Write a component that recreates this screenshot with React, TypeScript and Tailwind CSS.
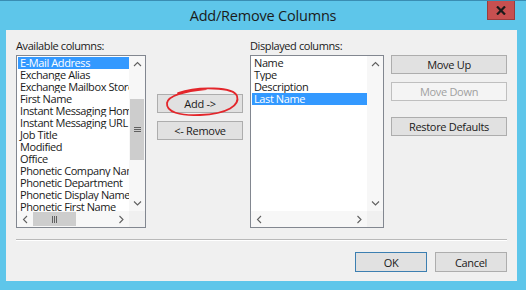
import React from "react";

const font = { fontFamily: '"Open Sans", "Noto Sans", sans-serif' };

const available = [
  "E-Mail Address",
  "Exchange Alias",
  "Exchange Mailbox Store",
  "First Name",
  "Instant Messaging Home Page",
  "Instant Messaging URL",
  "Job Title",
  "Modified",
  "Office",
  "Phonetic Company Name",
  "Phonetic Department",
  "Phonetic Display Name",
  "Phonetic First Name",
];

const displayed = ["Name", "Type", "Description", "Last Name"];

type Dir = "up" | "down" | "left" | "right";

const Arrow = ({ dir }: { dir: Dir }) => {
  const pts = {
    up: "1,5 4.5,1.5 8,5",
    down: "1,1.5 4.5,5 8,1.5",
    left: "5,1 1.5,4.5 5,8",
    right: "1.5,1 5,4.5 1.5,8",
  }[dir];
  const vertical = dir === "up" || dir === "down";
  return (
    <svg
      width={vertical ? 9 : 7}
      height={vertical ? 7 : 9}
      viewBox={vertical ? "0 0 9 7" : "0 0 7 9"}
    >
      <polyline points={pts} fill="none" stroke="#606060" strokeWidth="1.1" />
    </svg>
  );
};

const WinButton = ({
  label,
  className = "",
  disabled = false,
  isDefault = false,
}: {
  label: string;
  className?: string;
  disabled?: boolean;
  isDefault?: boolean;
}) => (
  <div
    className={`flex items-center justify-center text-[11px] tracking-[-0.3px] leading-none ${
      disabled
        ? "bg-[#f4f4f4] border border-[#bfbfbf] text-[#a0a0a0]"
        : isDefault
        ? "bg-[#e1e1e1] border border-[#3c7fb1] text-[#1a1a1a]"
        : "bg-[#e1e1e1] border border-[#adadad] text-[#1a1a1a]"
    } ${className}`}
  >
    {label}
  </div>
);

const ListBox = ({
  items,
  selected,
  withThumbs,
}: {
  items: string[];
  selected: number;
  withThumbs: boolean;
}) => (
  <div className="border border-[#828790] bg-white flex flex-col h-[173px]">
    <div className="flex flex-1 min-h-0">
      <div className="flex-1 min-w-0 overflow-hidden pt-[1px] pl-[1px]">
        {items.map((it, i) => (
          <div
            key={it}
            className={`h-[12px] leading-[12px] text-[11px] tracking-[-0.4px] whitespace-nowrap overflow-hidden pl-[2px] ${
              i === selected ? "bg-[#3399ff] text-white" : "text-[#1a1a1a]"
            }`}
          >
            {it}
          </div>
        ))}
      </div>
      <div className="w-[16px] flex flex-col bg-[#f7f7f7]">
        <div className="h-[16px] flex items-center justify-center">
          <Arrow dir="up" />
        </div>
        <div className="flex-1 flex flex-col">
          {withThumbs && (
            <>
              <div className="h-[27px]" />
              <div className="h-[61px] bg-[#cdcdcd] mx-[1px] flex items-center justify-center">
                <svg width="7" height="7" viewBox="0 0 7 7">
                  <path d="M0 1.5h7M0 3.5h7M0 5.5h7" stroke="#606060" strokeWidth="1" />
                </svg>
              </div>
            </>
          )}
        </div>
        <div className="h-[16px] flex items-center justify-center">
          <Arrow dir="down" />
        </div>
      </div>
    </div>
    <div className="h-[16px] flex">
      <div className="flex-1 flex bg-[#f7f7f7]">
        <div className="w-[16px] flex items-center justify-center">
          <Arrow dir="left" />
        </div>
        <div className="flex-1 flex">
          {withThumbs && (
            <div className="w-[43px] bg-[#cdcdcd] my-[1px] flex items-center justify-center">
              <svg width="7" height="7" viewBox="0 0 7 7">
                <path d="M1.5 0v7M3.5 0v7M5.5 0v7" stroke="#606060" strokeWidth="1" />
              </svg>
            </div>
          )}
        </div>
        <div className="w-[16px] flex items-center justify-center">
          <Arrow dir="right" />
        </div>
      </div>
      <div className="w-[16px] bg-[#f0f0f0]" />
    </div>
  </div>
);

export default function App() {
  return (
    <div
      className="relative w-[526px] h-[290px] bg-[#5ec6ea] border-t border-[#3a8db3] flex flex-col overflow-hidden"
      style={font}
    >
      {/* title bar */}
      <div className="relative h-[29px] flex items-center justify-center">
        <span className="text-[14.5px] tracking-[-0.2px] text-[#1b1b1b] pt-[1px]">
          Add/Remove Columns
        </span>
        <div className="absolute right-[11px] top-[-1px] w-[28px] h-[20px] bg-[#c75050] border border-[#9b3c3c] flex items-center justify-center">
          <svg width="10" height="9" viewBox="0 0 10 9">
            <path d="M1 0.5L9 8.5M9 0.5L1 8.5" stroke="#1a1a1a" strokeWidth="2.2" />
          </svg>
        </div>
      </div>

      {/* client */}
      <div className="ml-[6px] w-[511px] h-[251px] bg-[#f0f0f0] px-[10px] pt-[8px] flex flex-col">
        <div className="flex">
          <div className="w-[130px] flex flex-col">
            <div className="h-[15px] leading-[15px] text-[11px] tracking-[-0.4px] text-[#1a1a1a] mb-[2px]">
              Available columns:
            </div>
            <ListBox items={available} selected={0} withThumbs />
          </div>

          <div className="w-[86px] ml-[11px] flex flex-col pt-[56px] gap-[8px]">
            <WinButton label="Add ->" className="h-[19px]" />
            <WinButton label="<- Remove" className="h-[19px]" />
          </div>

          <div className="w-[134px] ml-[7px] flex flex-col">
            <div className="h-[15px] leading-[15px] text-[11px] tracking-[-0.4px] text-[#1a1a1a] mb-[2px]">
              Displayed columns:
            </div>
            <ListBox items={displayed} selected={3} withThumbs={false} />
          </div>

          <div className="w-[116px] ml-[7px] flex flex-col pt-[17px]">
            <WinButton label="Move Up" className="h-[19px]" />
            <WinButton label="Move Down" className="h-[19px] mt-[8px]" disabled />
            <WinButton label="Restore Defaults" className="h-[19px] mt-[16px]" />
          </div>
        </div>

        <div className="mt-[11px] h-[1px] bg-[#b9b9b9]" />
        <div className="h-[1px] bg-white" />

        <div className="flex justify-end gap-[8px] mt-[11px]">
          <WinButton label="OK" className="w-[72px] h-[20px]" isDefault />
          <WinButton label="Cancel" className="w-[72px] h-[20px]" />
        </div>
      </div>

      {/* red annotation around the Add button */}
      <svg
        className="absolute inset-0 pointer-events-none"
        width="526"
        height="290"
        viewBox="0 0 526 290"
      >
        <path
          d="M178 92 C198 85, 234 86, 237 95 C240 104, 228 113, 200 114 C180 115, 166 111, 167 102 C168 95, 184 90, 206 88"
          fill="none"
          stroke="#e3262b"
          strokeWidth="1.8"
          strokeLinecap="round"
        />
      </svg>
    </div>
  );
}
